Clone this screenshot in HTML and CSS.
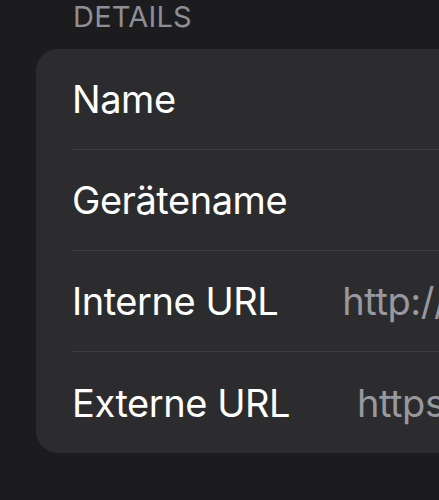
FILE: index.html
```html
<!DOCTYPE html>
<html lang="de">
<head>
<meta charset="utf-8">
<link rel="stylesheet" href="styles.css">
</head>
<body>
<div class="screen">
  <div class="section-header">DETAILS</div>
  <div class="card">
    <div class="row"><span class="label">Name</span></div>
    <div class="row"><span class="label">Gerätename</span></div>
    <div class="row"><span class="label">Interne URL</span><span class="value value-int">http://homeassistant.local:8123</span></div>
    <div class="row last"><span class="label">Externe URL</span><span class="value value-ext">https://example.ui.nabu.casa</span></div>
  </div>
</div>
</body>
</html>
```

FILE: styles.css
```css
html, body {
  margin: 0;
  padding: 0;
  background: #1c1c1e;
  overflow: hidden;
}
.screen {
  width: 439px;
  height: 500px;
  font-family: Inter, "Noto Sans", sans-serif;
  color: #fff;
  overflow: hidden;
}
.section-header {
  padding: 1px 0 0 73px;
  height: 49px;
  box-sizing: border-box;
  font-size: 29px;
  line-height: 32px;
  color: #8e8e93;
  letter-spacing: 0.2px;
}
.card {
  margin-left: 36px;
  width: 600px;
  background: #2c2c2e;
  border-radius: 22px;
  padding-left: 36px;
  box-sizing: border-box;
}
.row {
  height: 101px;
  display: flex;
  align-items: center;
  border-bottom: 1.5px solid #3c3c3f;
  box-sizing: border-box;
  white-space: nowrap;
  font-size: 38px;
  letter-spacing: -0.45px;
}
.row.last {
  border-bottom: none;
}
.label {
  color: #fff;
}
.value {
  color: #98989f;
}
.value-int { margin-left: 64px; }
.value-ext { margin-left: 67px; }
```
